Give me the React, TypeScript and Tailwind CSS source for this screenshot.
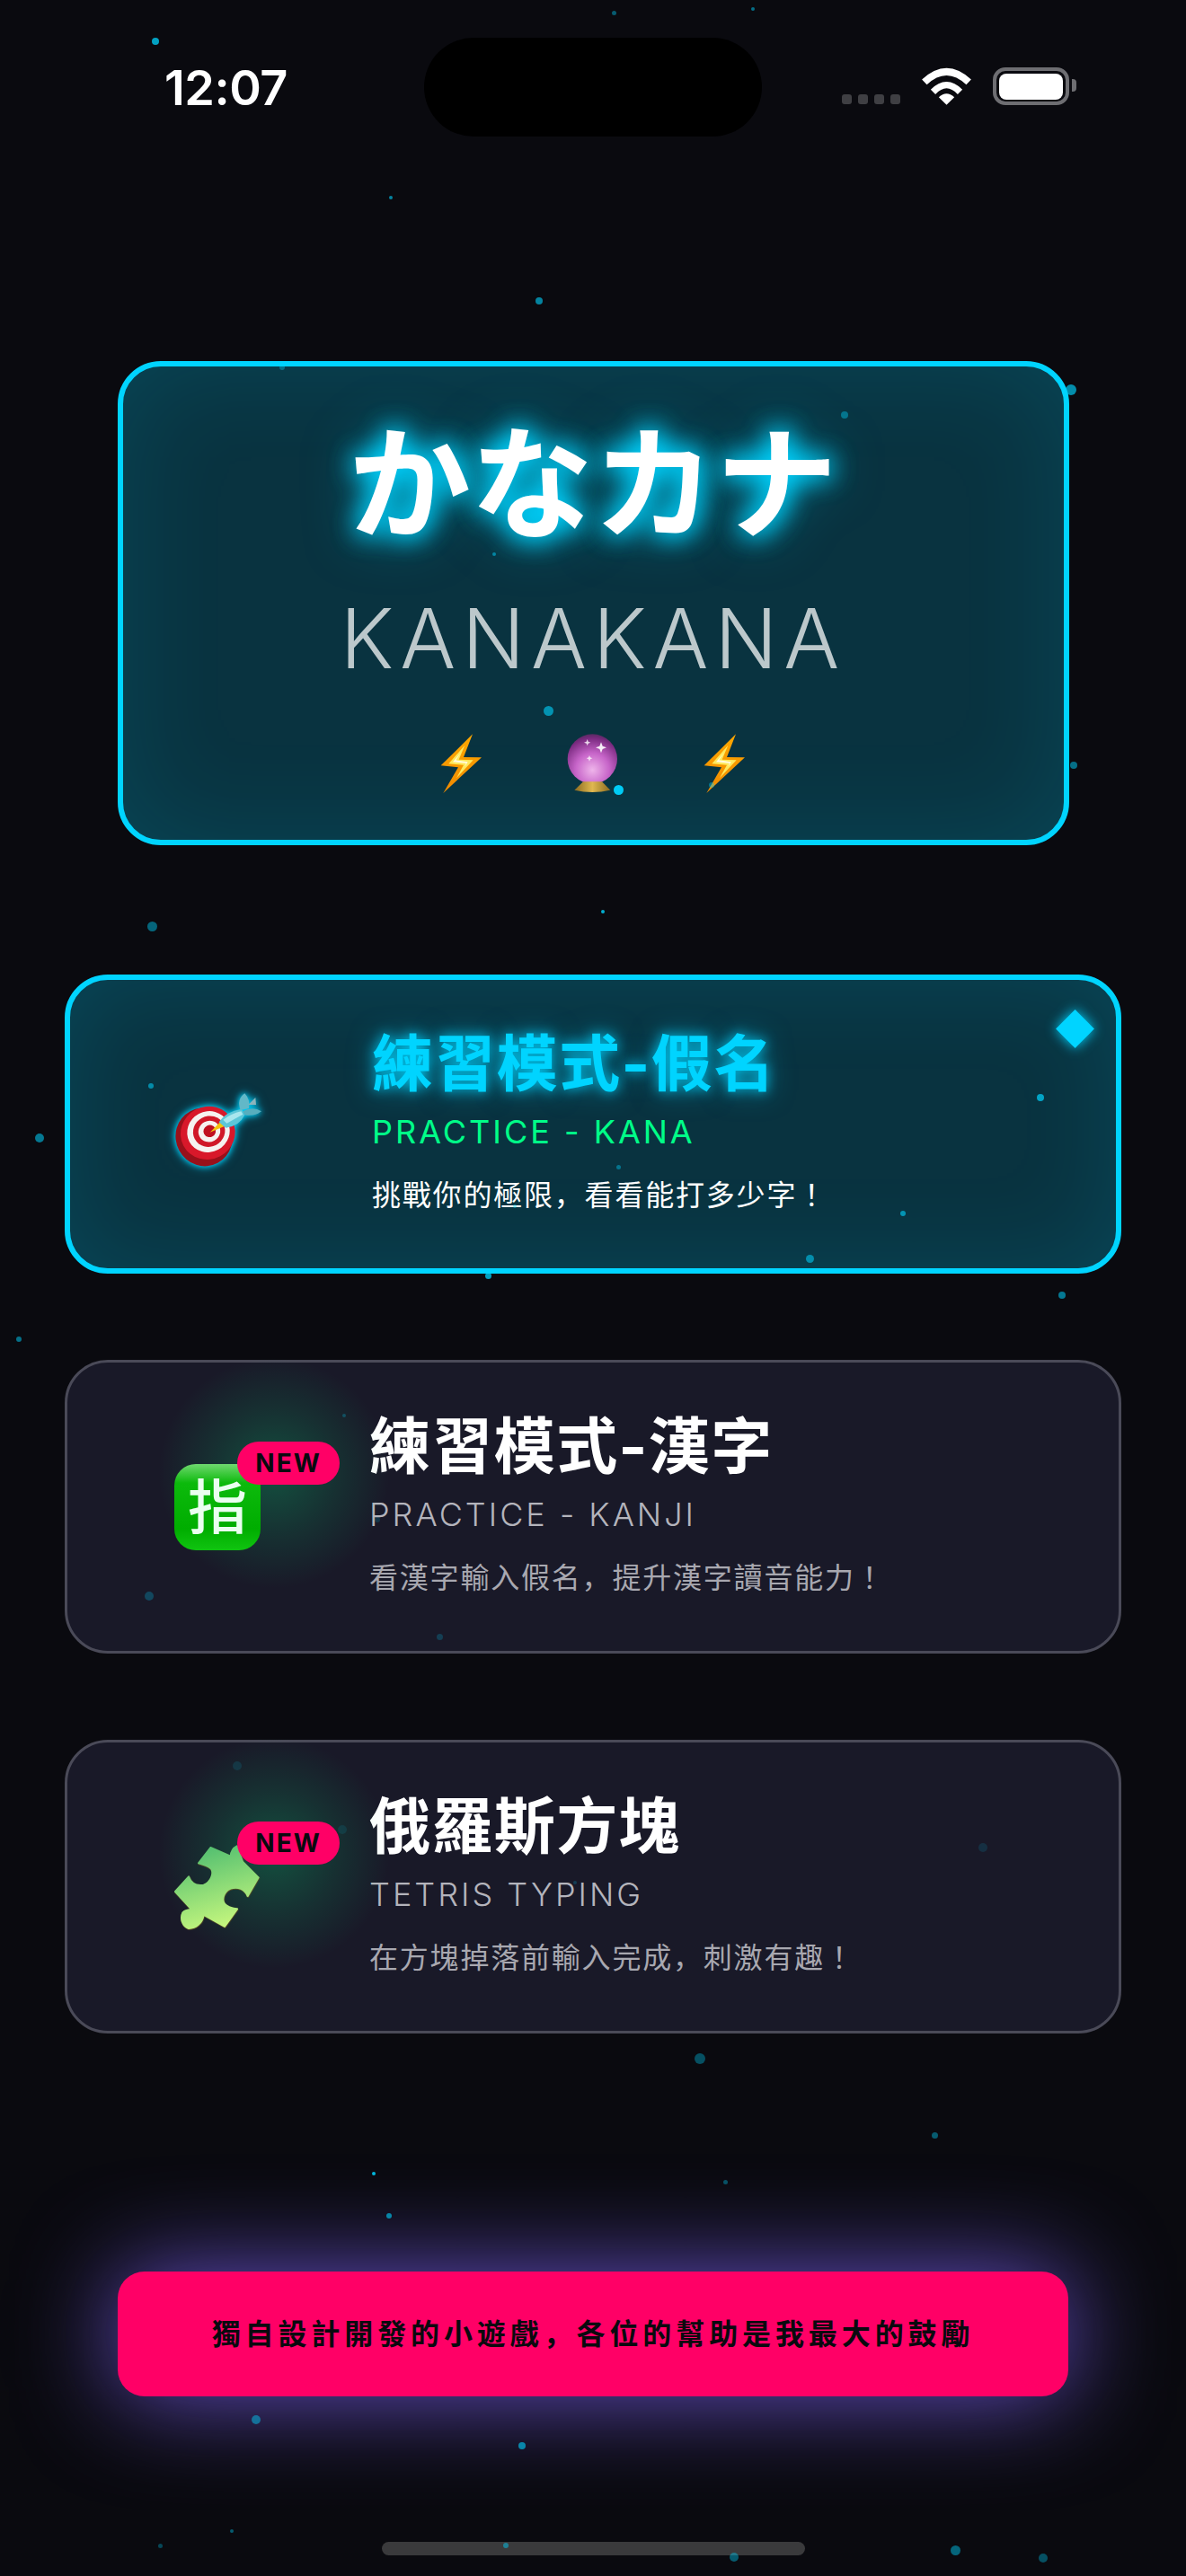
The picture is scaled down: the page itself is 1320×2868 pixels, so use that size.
const particles = [
  [173, 46, 4, 0.75], [683, 14, 2.5, 0.4], [838, 10, 2, 0.5], [435, 220, 2, 0.6], [600, 335, 4, 0.6],
  [314, 409, 3, 0.35], [1192, 434, 6, 0.65], [940, 462, 4, 0.4], [550, 617, 2, 0.5], [610, 791, 5.5, 0.6],
  [688, 879, 5.5, 0.95], [792, 874, 3, 0.4], [1195, 852, 4, 0.5], [671, 1015, 2, 0.8], [169, 1031, 5.5, 0.45],
  [44, 1267, 5, 0.55], [168, 1209, 3, 0.55], [1158, 1222, 4, 0.7], [688, 1299, 2.5, 0.4], [573, 1343, 2, 0.4],
  [1005, 1351, 3, 0.6], [901, 1401, 4.5, 0.55], [543, 1420, 3.5, 0.75], [1182, 1442, 4, 0.55], [21, 1491, 3, 0.5],
  [166, 1777, 5, 0.25], [383, 1576, 2, 0.25], [489, 1822, 3.5, 0.2], [420, 1692, 3, 0.15], [640, 2096, 2, 0.2],
  [264, 1966, 5, 0.12], [381, 2037, 5, 0.1], [1094, 2057, 5, 0.12], [779, 2292, 6, 0.35], [1040, 2377, 3.5, 0.4],
  [416, 2420, 2, 0.85], [807, 2429, 2.5, 0.35], [433, 2467, 3, 0.6], [285, 2694, 5, 0.45], [581, 2723, 4, 0.6],
  [258, 2818, 2, 0.4], [178, 2834, 2.5, 0.3], [563, 2834, 3, 0.45], [817, 2847, 5, 0.4], [1063, 2839, 5.5, 0.45],
  [1161, 2848, 5, 0.35],
]

const Bolt = () => (
  <svg viewBox="0 0 200 255" className="h-[85px] w-[66.67px] shrink-0">
    <defs>
      <linearGradient id="bolt" x1="0" y1="0" x2="0" y2="1">
        <stop offset="0" stopColor="#ffa800" />
        <stop offset="1" stopColor="#f08a00" />
      </linearGradient>
    </defs>
    <path d="M138 25 L32 130 L90 136 L40 222 L168 103 L108 102 Z" fill="url(#bolt)" />
    <path d="M112 62 L58 124 L108 128 L84 172 L140 112 L92 110 Z" fill="#ffe95c" />
    <path d="M98 88 L72 118 L116 122 L112 134 L122 118 L82 112 Z" fill="#fffbe0" />
  </svg>
)

const CrystalBall = () => (
  <svg viewBox="440 0 210 255" className="h-[85px] w-[70px] shrink-0">
    <defs>
      <radialGradient id="ball" cx="0.5" cy="0.72" r="0.75">
        <stop offset="0" stopColor="#eeb4ea" />
        <stop offset="0.45" stopColor="#c765c9" />
        <stop offset="0.85" stopColor="#7a2a80" />
        <stop offset="1" stopColor="#4d2a58" />
      </radialGradient>
      <linearGradient id="base" x1="0" y1="0" x2="1" y2="0">
        <stop offset="0" stopColor="#8a6a20" />
        <stop offset="0.5" stopColor="#e0b850" />
        <stop offset="1" stopColor="#8a6a20" />
      </linearGradient>
    </defs>
    <circle cx="543" cy="108" r="83" fill="url(#ball)" />
    <path d="M512 184 L575 184 L603 212 Q543 226 483 212 Z" fill="url(#base)" />
    <path d="M572 52 L577 65 L590 70 L577 75 L572 88 L567 75 L554 70 L567 65 Z" fill="#fff" opacity="0.9" />
    <path d="M526 42 L529 50 L537 53 L529 56 L526 64 L523 56 L515 53 L523 50 Z" fill="#fff" opacity="0.8" />
    <path d="M533 96 L536 103 L543 106 L536 109 L533 116 L530 109 L523 106 L530 103 Z" fill="#fff" opacity="0.75" />
  </svg>
)

const Target = () => (
  <svg viewBox="0 0 375 330" className="h-[110px] w-[125px] shrink-0 translate-y-[7px]">
    <g className="[filter:drop-shadow(0_0_10px_#00d4ff)_drop-shadow(0_0_14px_rgba(0,212,255,0.6))]">
      <ellipse cx="132" cy="186" rx="94" ry="98" fill="#98101a" transform="rotate(-28 132 186)" />
      <ellipse cx="145" cy="172" rx="92" ry="88" fill="#d8182a" transform="rotate(-28 145 172)" />
      <ellipse cx="147" cy="168" rx="72" ry="68" fill="#f6f2f0" transform="rotate(-28 147 168)" />
      <ellipse cx="149" cy="167" rx="54" ry="51" fill="#d01828" transform="rotate(-28 149 167)" />
      <ellipse cx="150" cy="167" rx="37" ry="35" fill="#f6f2f0" transform="rotate(-28 150 167)" />
      <ellipse cx="151" cy="166" rx="21" ry="20" fill="#c01020" transform="rotate(-28 151 166)" />
      <path d="M152 170 L186 136 L200 150 Z" fill="#f4c20d" />
      <path d="M182 136 Q205 100 258 92 L268 112 Q250 150 205 155 Z" fill="#5cc6d8" />
      <path d="M196 128 Q222 108 256 100 L262 110 Q240 122 208 140 Z" fill="#a8e6ee" />
      <path d="M254 96 Q240 60 268 40 Q288 62 282 90 Z" fill="#62b8c8" />
      <path d="M262 100 Q295 82 324 100 Q300 118 268 112 Z" fill="#58aebe" />
      <path d="M280 78 L304 54 L306 78 Z" fill="#8bb4bc" />
    </g>
  </svg>
)

const Puzzle = () => (
  <svg viewBox="0 0 345 330" className="h-[110px] w-[115px] shrink-0">
    <defs>
      <linearGradient id="piece" x1="0.3" y1="0" x2="0.6" y2="1">
        <stop offset="0" stopColor="#4fbd70" />
        <stop offset="1" stopColor="#c8f87e" />
      </linearGradient>
    </defs>
    <path
      d="M148 33 L215 62 C216 48 224 34 236 28 L255 80 L308 133 L272 195 C262 172 240 162 215 170 C195 178 186 200 192 216 C200 232 220 236 237 238 L195 297 L125 258 C120 285 100 303 75 303 C55 297 45 270 55 250 C65 240 75 240 85 240 L30 180 L75 130 C82 150 100 162 125 158 C150 148 160 118 150 103 C135 92 120 88 108 85 Z"
      fill="url(#piece)"
      stroke="url(#piece)"
      strokeWidth="6"
      strokeLinejoin="round"
      className="[filter:drop-shadow(1px_2px_0_#6b5a24)]"
    />
  </svg>
)

const KanjiBadge = () => (
  <div className="flex h-[96px] w-[96px] items-center justify-center rounded-[24px] bg-[linear-gradient(180deg,#6fd86f_0%,#0cba0c_22%,#00ad00_75%,#10c410_100%)] text-[66px] leading-none font-medium text-[#eafff0]">
    指
  </div>
)

const NewBadge = () => (
  <div className="absolute top-[-25px] left-[70px] flex h-[48px] w-[114px] items-center justify-center rounded-full bg-[#ff0066] text-[28px] font-bold tracking-[2px] text-[#0a0a0f]">
    NEW
  </div>
)

type ModeCardProps = {
  active?: boolean
  isNew?: boolean
  icon: React.ReactNode
  title: string
  sub: string
  desc: string
}

const ModeCard = ({ active, isNew, icon, title, sub, desc }: ModeCardProps) => {
  return (
    <div
      className={
        active
          ? 'relative flex h-[333px] items-center rounded-[48px] border-[6px] border-[#00d4ff] bg-[#093340] pl-[119px] shadow-[inset_0_0_110px_rgba(0,212,255,0.13)]'
          : 'relative flex h-[327px] items-center rounded-[48px] border-[3px] border-[#4a4a58] bg-[#191928] pl-[119px]'
      }
    >
      <div className="relative mr-[121px] flex h-[96px] w-[96px] shrink-0 items-center justify-center">
        {isNew && (
          <div className="absolute top-[-120px] left-[-19px] h-[260px] w-[260px] rounded-full bg-[radial-gradient(circle,rgba(0,255,136,0.24)_0%,rgba(0,255,136,0.1)_38%,transparent_70%)]" />
        )}
        <div className="relative">{icon}</div>
        {isNew && <NewBadge />}
      </div>
      <div className="flex flex-col pb-[7px]">
        <h2
          className={
            active
              ? 'text-[68px] leading-[84px] font-bold tracking-[1.4px] text-[#00d4ff] [text-shadow:0_0_14px_rgba(0,212,255,0.85),0_0_30px_rgba(0,212,255,0.5)]'
              : 'text-[68px] leading-[84px] font-bold tracking-[1.4px] text-white'
          }
        >
          {title}
        </h2>
        <div
          className={
            active
              ? 'mt-[12px] text-[36px] leading-[44px] tracking-[3px] text-[#00ff88]'
              : 'mt-[12px] text-[36px] leading-[44px] font-light tracking-[3px] text-[#b4b4bc]'
          }
        >
          {sub}
        </div>
        <p
          className={
            active
              ? 'mt-[22px] text-[32px] leading-[48px] tracking-[1.8px] text-white'
              : 'mt-[22px] text-[32px] leading-[48px] tracking-[1.8px] text-[#a8a8b0]'
          }
        >
          {desc}
          <span className="font-['Noto_Sans_CJK_TC']">！</span>
        </p>
      </div>
      {active && (
        <div className="absolute top-[18px] right-[24px] font-['DejaVu_Sans'] text-[56px] leading-[64px] text-[#00d4ff] [text-shadow:0_0_14px_#00d4ff]">
          ◆
        </div>
      )}
    </div>
  )
}

const App = () => {
  return (
    <div className="relative h-[2868px] w-[1320px] overflow-hidden bg-[#0a0a0f] font-['Inter','Noto_Sans_CJK_SC',sans-serif]">
      <div className="flex h-[402px] items-start pt-[42px] pl-[183px]">
        <div className="mt-[26px] w-[289px] text-[54px] leading-[60px] font-semibold tracking-[-0.5px] text-white">
          12:07
        </div>
        <div className="h-[110px] w-[376px] rounded-[55px] bg-black" />
        <div className="mt-[33px] ml-[89px] flex h-[42px] items-end">
          <div className="flex gap-[7px] pb-[1px]">
            <div className="h-[11px] w-[11px] rounded-[3px] bg-[#3f3f43]" />
            <div className="h-[11px] w-[11px] rounded-[3px] bg-[#3f3f43]" />
            <div className="h-[11px] w-[11px] rounded-[3px] bg-[#3f3f43]" />
            <div className="h-[11px] w-[11px] rounded-[3px] bg-[#3f3f43]" />
          </div>
          <svg viewBox="285 30 170 126" className="ml-[23px] h-[42px] w-[57px]">
            <path d="M296 79 Q370 10 444 79" fill="none" stroke="#fff" strokeWidth="24" />
            <path d="M325 112 Q370 66 415 112" fill="none" stroke="#fff" strokeWidth="22" />
            <path d="M370 155 L344 130 Q370 106 396 130 Z" fill="#fff" />
          </svg>
          <div className="relative ml-[23px] flex h-[42px] w-[85px] items-center justify-center rounded-[14px] border-[4px] border-[#6e6e72]">
            <div className="h-[29px] w-[71px] rounded-[8px] bg-white" />
            <div className="absolute top-[9px] right-[-12px] h-[14px] w-[5px] rounded-r-[4px] bg-[#6e6e72]" />
          </div>
        </div>
      </div>

      <div className="mx-auto mb-[144px] flex h-[539px] w-[1059px] flex-col items-center rounded-[48px] border-[6px] border-[#00d4ff] bg-[#093340] shadow-[inset_0_0_120px_rgba(0,212,255,0.12)]">
        <h1 className="mt-[52px] text-[136px] leading-[160px] font-bold text-white [text-shadow:0_0_30px_#00d4ff,0_0_30px_#00d4ff,0_0_60px_rgba(0,212,255,0.5)]">
          かなカナ
        </h1>
        <div className="mt-[36px] text-[92px] leading-[110px] font-light tracking-[7px] text-[#bcc8cb]">
          KANAKANA
        </div>
        <div className="mt-[43px] flex items-center gap-[78px]">
          <Bolt />
          <CrystalBall />
          <Bolt />
        </div>
      </div>

      <div className="flex flex-col gap-[96px] px-[72px]">
        <ModeCard
          active
          icon={<Target />}
          title="練習模式-假名"
          sub="PRACTICE - KANA"
          desc="挑戰你的極限，看看能打多少字"
        />
        <ModeCard
          isNew
          icon={<KanjiBadge />}
          title="練習模式-漢字"
          sub="PRACTICE - KANJI"
          desc="看漢字輸入假名，提升漢字讀音能力"
        />
        <ModeCard
          isNew
          icon={<Puzzle />}
          title="俄羅斯方塊"
          sub="TETRIS TYPING"
          desc="在方塊掉落前輸入完成，刺激有趣"
        />
      </div>

      <div className="mx-auto mt-[265px] flex h-[139px] w-[1058px] items-center justify-center rounded-[30px] bg-[#ff0066] text-[32px] font-semibold tracking-[4.9px] text-[#0a0a0f] shadow-[0_0_110px_rgba(108,84,210,0.95)]">
        獨自設計開發的小遊戲，各位的幫助是我最大的鼓勵
      </div>

      <div className="mx-auto mt-[162px] h-[15px] w-[471px] rounded-full bg-[#3a3a3c]" />

      <div className="pointer-events-none absolute inset-0">
        {particles.map(([x, y, r, o]) => (
          <div
            key={`${x}-${y}`}
            className="absolute rounded-full bg-[#00d4ff]"
            style={{ left: x - r, top: y - r, width: r * 2, height: r * 2, opacity: o }}
          />
        ))}
      </div>
    </div>
  )
}

export default App
